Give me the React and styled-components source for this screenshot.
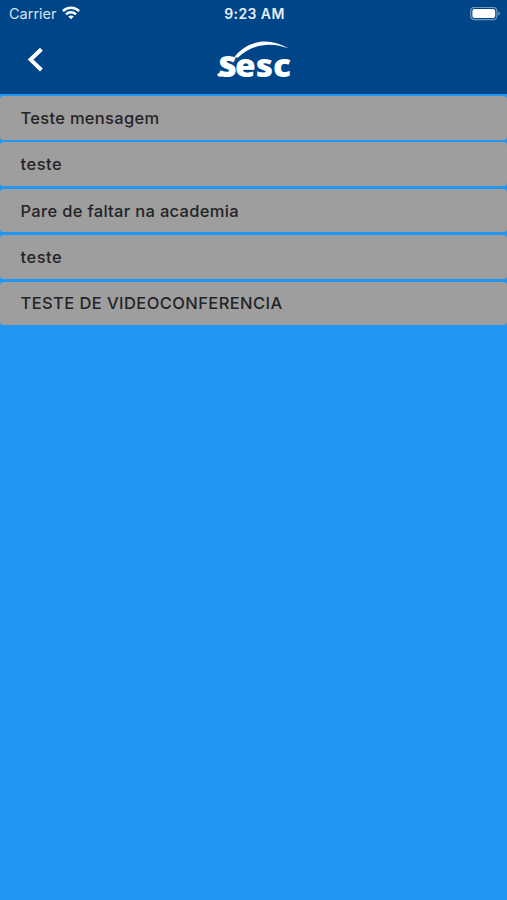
import React from "react";
import styled, { createGlobalStyle } from "styled-components";

const GlobalStyle = createGlobalStyle`
  * { box-sizing: border-box; }
  body { margin: 0; background: #2196f3; }
`;

const Screen = styled.div`
  height: 900px;
  overflow: hidden;
  background: #2196f3;
  font-family: Inter, "Liberation Sans", sans-serif;
`;

const Header = styled.header`
  height: 93.5px;
  background: #004588;
  color: #fff;
`;

const StatusBar = styled.div`
  height: 27px;
  display: grid;
  grid-template-columns: 1fr auto 1fr;
  align-items: center;
  padding: 0 7px 0 9px;
  font-size: 14.5px;
  line-height: 27px;
`;

const Carrier = styled.div`
  display: flex;
  align-items: center;
  gap: 5px;
  color: #d5e3f1;
`;

const Clock = styled.div`
  font-weight: 600;
  font-size: 14px;
  letter-spacing: 0.4px;
  color: #e6eef7;
`;

const Battery = styled.svg`
  justify-self: end;
  display: block;
  margin-right: -1px;
`;

const NavBar = styled.nav`
  height: 66px;
  display: grid;
  grid-template-columns: 1fr 90px 1fr;
`;

const BackButton = styled.button`
  width: 66px;
  height: 66px;
  padding: 0 0 0 26px;
  border: 0;
  background: none;
  color: #fff;
`;

const NavLogo = styled.div`
  padding-top: 3px;
`;

const Icon = styled.svg`
  display: block;
`;

const WifiIcon = styled(Icon)`
  margin-bottom: 2px;
`;

const LogoText = styled.text`
  font-family: "Open Sans", sans-serif;
  font-weight: 800;
  fill: #fff;
`;

const List = styled.ul`
  list-style: none;
  margin: 0;
  padding: 2.5px 0 0;
  display: flex;
  flex-direction: column;
  gap: 2.7px;
`;

const Message = styled.li`
  height: 43.7px;
  padding-left: 20.5px;
  display: flex;
  align-items: center;
  border-radius: 3.5px;
  background: #9e9e9e;
  color: #242426;
  font-size: 16.5px;
  font-weight: 500;
  letter-spacing: ${(p) => p.$tracking}px;
`;

const messages = [
  { text: "Teste mensagem", tracking: 0.3 },
  { text: "teste", tracking: 0.5 },
  { text: "Pare de faltar na academia", tracking: 0.32 },
  { text: "teste", tracking: 0.5 },
  { text: "TESTE DE VIDEOCONFERENCIA", tracking: 0.41 },
];

function Wifi() {
  return (
    <WifiIcon width="18" height="14" viewBox="0 0 18 14" fill="none" stroke="#fff" strokeWidth="2.4">
      <path d="M0.9 5.1 C5.4 0.6 12.6 0.6 17.1 5.1" />
      <path d="M4 8.3 C6.8 5.5 11.2 5.5 14 8.3" />
      <path d="M9 13.3 L6.2 10.5 C7.8 9 10.2 9 11.8 10.5 Z" fill="#fff" stroke="none" />
    </WifiIcon>
  );
}

function BatteryIcon() {
  return (
    <Battery width="31" height="14" viewBox="0 0 31 14">
      <rect x="0.7" y="0.4" width="26.2" height="12.2" rx="3.6" fill="none" stroke="#7499c0" strokeWidth="1.2" />
      <rect x="2.4" y="2.1" width="22.8" height="8.8" rx="2" fill="#fff" />
      <path d="M28.3 4.4 C30.4 5 30.4 8 28.3 8.6 Z" fill="#7499c0" />
    </Battery>
  );
}

function Logo() {
  return (
    <Icon width="90" height="60" viewBox="0 -6 90 60" role="img" aria-label="Sesc">
      <path d="M25 21.5 C38 4.5 59 0.5 80 12.6 C61 5.2 43 8.5 29 21.5 Z" fill="#fff" />
      <LogoText x="9.5" y="41" fontSize="37" textLength="18.5" lengthAdjust="spacingAndGlyphs">s</LogoText>
      <LogoText x="26" y="41.3" fontSize="31" textLength="56" lengthAdjust="spacingAndGlyphs">esc</LogoText>
      <path d="M8 38.5 L13.5 34.5 L13 40.8 L9.5 40.5 Z" fill="#fff" />
    </Icon>
  );
}

export default function App() {
  return (
    <Screen>
      <GlobalStyle />
      <Header>
        <StatusBar>
          <Carrier>
            <span>Carrier</span>
            <Wifi />
          </Carrier>
          <Clock>9:23 AM</Clock>
          <BatteryIcon />
        </StatusBar>
        <NavBar>
          <BackButton aria-label="Voltar">
            <Icon width="18" height="26" viewBox="0 0 18 26" fill="none" stroke="#fff" strokeWidth="4">
              <path d="M15.4 2.2 L4.6 12.6 L15.4 23" />
            </Icon>
          </BackButton>
          <NavLogo>
            <Logo />
          </NavLogo>
        </NavBar>
      </Header>
      <List>
        {messages.map((m, i) => (
          <Message key={i} $tracking={m.tracking}>{m.text}</Message>
        ))}
      </List>
    </Screen>
  );
}
